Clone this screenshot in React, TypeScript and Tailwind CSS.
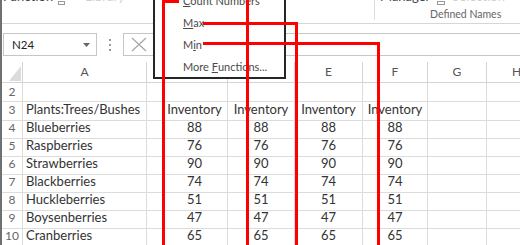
const cols = ['', 'A', '', '', 'E', 'F', 'G', 'H'];

const rows: { n: number; name: string; v: string }[] = [
  { n: 4, name: 'Blueberries', v: '88' },
  { n: 5, name: 'Raspberries', v: '76' },
  { n: 6, name: 'Strawberries', v: '90' },
  { n: 7, name: 'Blackberries', v: '74' },
  { n: 8, name: 'Huckleberries', v: '51' },
  { n: 9, name: 'Boysenberries', v: '47' },
  { n: 10, name: 'Cranberries', v: '65' },
];

const grid = 'grid grid-cols-[21px_124px_81px_67px_68px_65px_59px_60px]';
const cell = 'border-r border-b border-[#dcdcdc] flex items-center';

function Row({ n, cells, h = 'h-[18px]' }: { n: number | string; cells: string[]; h?: string }) {
  return (
    <div className={`${grid} ${h}`}>
      <div className={`${cell} justify-center text-[12px] text-[#666]`}>{n}</div>
      <div className={`${cell} pl-[3px] text-[13px] text-[#333]`}>{cells[0]}</div>
      <div className={`${cell} justify-center pl-[15px] text-[13px] text-[#333]`}>{cells[1]}</div>
      <div className={`${cell} justify-center text-[13px] text-[#333]`}>{cells[2]}</div>
      <div className={`${cell} justify-center text-[13px] text-[#333]`}>{cells[3]}</div>
      <div className={`${cell} justify-center text-[13px] text-[#333]`}>{cells[4]}</div>
      <div className={cell} />
      <div className={cell} />
    </div>
  );
}

export default function App() {
  return (
    <div className="relative w-[520px] h-[245px] overflow-hidden bg-white border-l-2 border-[#707070] [font-family:Lato,sans-serif]">
      {/* Ribbon (cut off at top) */}
      <div className="h-[24px] border-b border-[#d6d6d6] flex overflow-hidden">
        <div className="w-[372px] flex items-start -mt-[10px] pl-[1px] gap-[5px] text-[13px] leading-[13px]">
          <span className="text-[#444]">Function</span>
          <svg width="8" height="14" viewBox="0 0 8 14" className="mt-[1px]">
            <rect x="0.5" y="10.5" width="6" height="3" fill="none" stroke="#9a9a9a" />
          </svg>
          <span className="ml-[14px] text-[#cfcfcf]">Library</span>
        </div>
        <div className="w-px h-[20px] bg-[#dedede]" />
        <div className="flex flex-col pl-[5px]">
          <div className="flex items-start -mt-[10px] gap-[7px] text-[13px] leading-[13px] h-[13px]">
            <span className="text-[#444]">Manager</span>
            <svg width="8" height="14" viewBox="0 0 8 14" className="mt-[1px]">
              <rect x="0.5" y="10.5" width="7" height="3" fill="none" stroke="#9a9a9a" />
            </svg>
            <span className="text-[#d0d0d0]">Selection</span>
          </div>
          <div className="pl-[50px] mt-[5px] text-[10.5px] text-[#666] leading-[12px]">Defined Names</div>
        </div>
      </div>
      <div className="h-[9px]" />

      {/* Formula bar */}
      <div className="h-[23px] flex">
        <div className="ml-[1px] w-[94px] border border-[#c6c6c6] flex items-center pl-[8px] pr-[6px] justify-between">
          <span className="text-[11.5px] text-[#222]">N24</span>
          <svg width="7" height="4" viewBox="0 0 7 4">
            <path d="M0 0h7L3.5 4z" fill="#666" />
          </svg>
        </div>
        <div className="w-[26px] flex flex-col items-center justify-center gap-[3px]">
          <div className="w-[2px] h-[2px] bg-[#999]" />
          <div className="w-[2px] h-[2px] bg-[#999]" />
          <div className="w-[2px] h-[2px] bg-[#999]" />
        </div>
        <div className="flex-1 border border-r-0 border-[#c6c6c6] flex items-center pl-[7px]">
          <svg width="16" height="15" viewBox="0 0 16 15">
            <path d="M1 1l14 13M15 1L1 14" stroke="#a8a8a8" strokeWidth="1.3" fill="none" />
          </svg>
        </div>
      </div>
      <div className="h-[6px]" />

      {/* Column headers */}
      <div className={`${grid} h-[21px]`}>
        {cols.map((c, i) => (
          <div
            key={i}
            className="border-r border-b border-[#d4d4d4] flex items-center justify-center text-[12px] text-[#555]"
          >
            {i === 0 ? (
              <svg width="12" height="15" viewBox="0 0 12 15" className="ml-auto mr-[1px] mt-[2px]">
                <path d="M12 0V15H0z" fill="#dcdcdc" />
              </svg>
            ) : (
              c
            )}
          </div>
        ))}
      </div>

      <Row n={2} cells={['', '', '', '', '']} h="h-[17px]" />
      <Row n={3} cells={['Plants:Trees/Bushes', 'Inventory', 'Inventory', 'Inventory', 'Inventory']} />
      {rows.map((r) => (
        <Row key={r.n} n={r.n} cells={[r.name, r.v, r.v, r.v, r.v]} />
      ))}
      <Row n={11} cells={['', '', '', '', '']} />

      {/* Dropdown menu */}
      <div className="absolute left-[151px] top-[-12px] w-[133px] h-[91px] border-2 border-[#262626] bg-white overflow-hidden text-[11px] text-[#4a4a4a]">
        <div className="h-[22px] flex items-center pl-[28px]">
          <span className="underline">C</span>ount Numbers
        </div>
        <div className="h-[22px] flex items-center pl-[28px]">
          <span className="underline">M</span>ax
        </div>
        <div className="h-[22px] flex items-center pl-[28px]">
          M<span className="underline">i</span>n
        </div>
        <div className="h-[22px] flex items-center pl-[28px]">
          More&nbsp;<span className="underline">F</span>unctions...
        </div>
      </div>

      {/* Red callout lines */}
      <div className="absolute left-[161px] top-0 w-[16px] h-[3px] bg-[#ff0000]" />
      <div className="absolute left-[160px] top-0 w-[3px] h-[245px] bg-[#ff0000]" />
      <div className="absolute left-[244px] top-0 w-[3px] h-[245px] bg-[#ff0000]" />
      <div className="absolute left-[201px] top-[22px] w-[95px] h-[3px] bg-[#ff0000]" />
      <div className="absolute left-[293px] top-[22px] w-[3px] h-[223px] bg-[#ff0000]" />
      <div className="absolute left-[201px] top-[42px] w-[177px] h-[3px] bg-[#ff0000]" />
      <div className="absolute left-[375px] top-[42px] w-[3px] h-[203px] bg-[#ff0000]" />
    </div>
  );
}
